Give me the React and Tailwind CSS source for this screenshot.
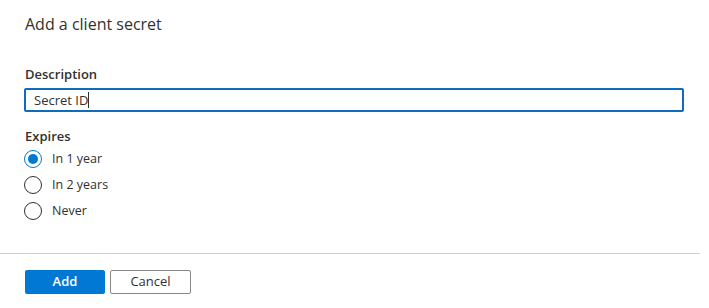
import React, { useState } from "react";

const options = ["In 1 year", "In 2 years", "Never"];

const App = () => {
  const [expires, setExpires] = useState("In 1 year");

  return (
    <div
      className="w-[709px] h-[308px] bg-white text-[#323130] overflow-hidden"
      style={{ fontFamily: '"Open Sans", "Noto Sans", sans-serif' }}
    >
      {/* Title */}
      <div className="px-[25px] pt-[12px]">
        <h1 className="text-[16px] leading-[24px] font-normal">Add a client secret</h1>
      </div>

      {/* Form */}
      <div className="pl-[24px] pr-[25px] pt-[28px]">
        <label className="block pl-[1px] text-[13px] leading-[20px] font-semibold">Description</label>
        <div className="mt-[4px] h-[24px] border-2 border-[#0f6cbd] rounded-[2px] flex items-center pl-[8px]">
          <span className="text-[13px] leading-[18px]">Secret ID</span>
          <span className="w-px h-[16px] bg-[#323130]" />
        </div>

        <div className="pl-[1px] mt-[14px] text-[13px] leading-[20px] font-semibold">Expires</div>
        <div className="flex flex-col">
          {options.map((opt) => (
            <button
              key={opt}
              onClick={() => setExpires(opt)}
              className="h-[26px] flex items-center gap-[10px] text-left"
            >
              <span
                className={
                  "w-[18px] h-[18px] rounded-full border flex items-center justify-center " +
                  (expires === opt ? "border-[#0078d4]" : "border-[#323130]")
                }
              >
                {expires === opt && <span className="w-[10px] h-[10px] rounded-full bg-[#0078d4]" />}
              </span>
              <span className="text-[12.5px] leading-[18px]">{opt}</span>
            </button>
          ))}
        </div>
      </div>

      {/* Footer */}
      <div className="mt-[29px] border-t border-[#d2d0ce] mr-[9px]" />
      <div className="px-[25px] pt-[16px] flex gap-[5px]">
        <button className="w-[80px] h-[24px] bg-[#0078d4] text-white text-[13px] font-semibold rounded-[2px]">
          Add
        </button>
        <button className="w-[81px] h-[24px] border border-[#8a8886] text-[13px] rounded-[2px]">
          Cancel
        </button>
      </div>
    </div>
  );
};

export default App;
